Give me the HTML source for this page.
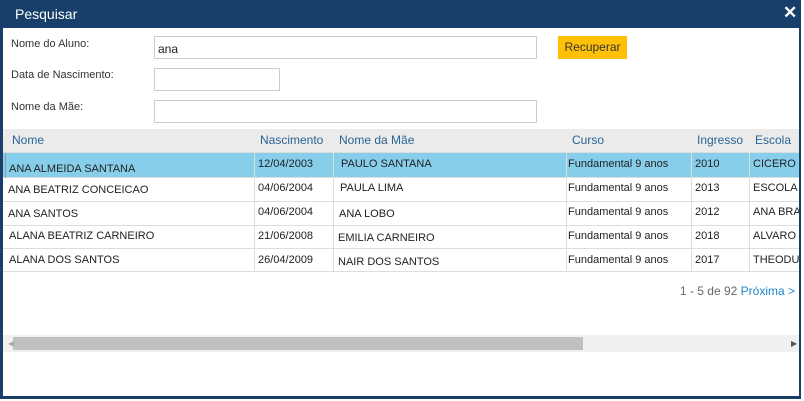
<!DOCTYPE html>
<html><head><meta charset="utf-8"><style>
*{margin:0;padding:0;box-sizing:border-box}
body{width:804px;height:401px;background:#fff;font-family:"Liberation Sans",sans-serif;position:relative;overflow:hidden}
.a{position:absolute}
.clip{position:absolute;left:0;top:0;width:799px;height:401px;overflow:hidden}
.bar{left:0;top:0;width:801px;height:28px;background:#173f6a}
.title{left:15px;top:6px;color:#fff;font-size:14px}
.x{left:783px;top:3px;color:#fff;font-size:17px;font-weight:bold}
.lb{left:0;top:0;width:3px;height:399px;background:#173f6a}
.rb{left:799px;top:0;width:2px;height:399px;background:#173f6a}
.bb{left:0;top:396px;width:801px;height:3px;background:#173f6a}
.lab{font-size:11px;color:#333}
.inp{border:1px solid #ccc;height:23px;background:#fff;font-size:12px;padding:5px 3px;color:#222}
.btn{left:558px;top:36px;width:69px;height:23px;background:#ffc107;font-size:12px;color:#333;text-align:center;line-height:23px}
.hdr{left:3px;top:129px;width:796px;height:24px;background:#ebebeb;border-bottom:1px solid #ddd}
.h{top:133px;font-size:12px;color:#2a6496}
.row{left:3px;width:796px;border-bottom:1px solid #ddd}
.c{font-size:11px;color:#222;white-space:nowrap}
.vl{width:1px;background:#ddd;top:153px;height:119px}
.pg{right:4px;top:284px;font-size:12px;color:#666;white-space:nowrap}
.pg span{color:#1a88c9}
.sb{left:3px;top:335px;width:796px;height:17px;background:#f0f0f0}
.th{left:13px;top:337px;width:570px;height:13px;background:#c0c0c0}
</style></head><body>
<div class="clip">
<div class="a bar"></div>
<div class="a title">Pesquisar</div>

<div class="a lab" style="left:11px;top:38px">Nome do Aluno:</div>
<div class="a inp" style="left:154px;top:36px;width:383px">ana</div>
<div class="a btn">Recuperar</div>
<div class="a lab" style="left:11px;top:69px">Data de Nascimento:</div>
<div class="a inp" style="left:154px;top:68px;width:126px"></div>
<div class="a lab" style="left:11px;top:101px">Nome da Mãe:</div>
<div class="a inp" style="left:154px;top:100px;width:383px"></div>

<div class="a hdr"></div>
<div class="a h" style="left:12px">Nome</div>
<div class="a h" style="left:260px">Nascimento</div>
<div class="a h" style="left:339px">Nome da Mãe</div>
<div class="a h" style="left:572px">Curso</div>
<div class="a h" style="left:697px">Ingresso</div>
<div class="a h" style="left:755px">Escola</div>

<div class="a row" style="top:153px;height:25px;background:#87ceeb"></div>
<div class="a row" style="top:178px;height:24px"></div>
<div class="a row" style="top:202px;height:24px"></div>
<div class="a row" style="top:226px;height:23px"></div>
<div class="a row" style="top:249px;height:23px"></div>
<div class="a" style="left:5px;top:153px;width:1px;height:25px;background:#999"></div>

<div class="a vl" style="left:254px"></div>
<div class="a vl" style="left:333px"></div>
<div class="a vl" style="left:566px"></div>
<div class="a vl" style="left:691px"></div>
<div class="a vl" style="left:749px"></div>

<div class="a c" style="left:9px;top:163px">ANA  ALMEIDA SANTANA</div>
<div class="a c" style="left:258px;top:158px">12/04/2003</div>
<div class="a c" style="left:341px;top:158px">PAULO  SANTANA</div>
<div class="a c" style="left:568px;top:158px">Fundamental 9 anos</div>
<div class="a c" style="left:695px;top:158px">2010</div>
<div class="a c" style="left:753px;top:158px">CICERO CA</div>

<div class="a c" style="left:8px;top:184px">ANA BEATRIZ  CONCEICAO</div>
<div class="a c" style="left:258px;top:182px">04/06/2004</div>
<div class="a c" style="left:340px;top:182px">PAULA LIMA</div>
<div class="a c" style="left:568px;top:182px">Fundamental 9 anos</div>
<div class="a c" style="left:695px;top:182px">2013</div>
<div class="a c" style="left:753px;top:182px">ESCOLA M</div>

<div class="a c" style="left:8px;top:208px">ANA  SANTOS</div>
<div class="a c" style="left:258px;top:206px">04/06/2004</div>
<div class="a c" style="left:339px;top:208px">ANA LOBO</div>
<div class="a c" style="left:568px;top:206px">Fundamental 9 anos</div>
<div class="a c" style="left:695px;top:206px">2012</div>
<div class="a c" style="left:753px;top:206px">ANA BRAN</div>

<div class="a c" style="left:9px;top:230px">ALANA BEATRIZ  CARNEIRO</div>
<div class="a c" style="left:258px;top:230px">21/06/2008</div>
<div class="a c" style="left:338px;top:232px">EMILIA  CARNEIRO</div>
<div class="a c" style="left:568px;top:230px">Fundamental 9 anos</div>
<div class="a c" style="left:695px;top:230px">2018</div>
<div class="a c" style="left:753px;top:230px">ALVARO P</div>

<div class="a c" style="left:9px;top:254px">ALANA  DOS SANTOS</div>
<div class="a c" style="left:258px;top:254px">26/04/2009</div>
<div class="a c" style="left:338px;top:256px">NAIR  DOS SANTOS</div>
<div class="a c" style="left:568px;top:254px">Fundamental 9 anos</div>
<div class="a c" style="left:695px;top:254px">2017</div>
<div class="a c" style="left:753px;top:254px">THEODULO</div>

<div class="a pg">1 - 5 de 92 <span>Próxima &gt;</span></div>

<div class="a sb"></div>
<div class="a th"></div>
<div class="a" style="left:8px;top:339px;font-size:8px;color:#aaa">◀</div>
<div class="a" style="left:791px;top:339px;font-size:8px;color:#555">▶</div>
</div>
<div class="a x">✕</div>
<div class="a lb"></div><div class="a rb"></div><div class="a bb"></div>
</body></html>
